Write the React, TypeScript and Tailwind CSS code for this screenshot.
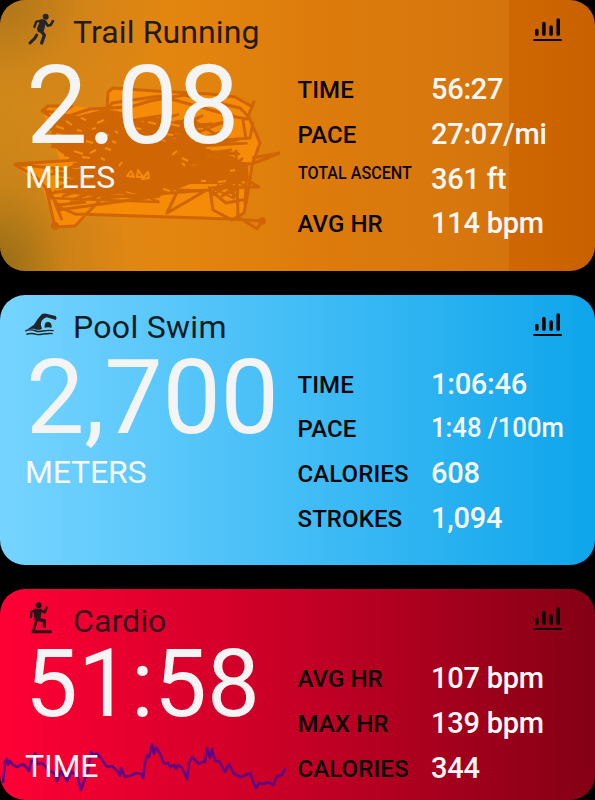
import React from "react";

interface Stat {
  label: string;
  value: string;
  labelClass?: string;
  valueClass?: string;
}

interface CardProps {
  title: string;
  icon: React.ReactNode;
  value: string;
  valueClass: string;
  unit: string;
  titleClass: string;
  stats: Stat[];
  className: string;
  children?: React.ReactNode;
}

const RunIcon = () => (
  <svg viewBox="0 0 150 150" className="h-[50px] w-[50px]" fill="none" stroke="#24262a" strokeLinejoin="round">
    <circle cx="77" cy="35" r="9" fill="#24262a" stroke="none" />
    <path d="M43 66 L49 50 L66 47" strokeWidth="7" strokeLinecap="round" />
    <path d="M76 50 L83 62 L92 60 L99 48" strokeWidth="7.5" strokeLinecap="round" />
    <path d="M59 47 Q70 42 77 49 L70 76 Q64 84 55 79 L53 70 L60 55 Z" fill="#24262a" strokeWidth="4" />
    <path d="M62 76 L73 91 L65 114" strokeWidth="10" strokeLinecap="round" />
    <path d="M30 114 L45 99 L50 90" strokeWidth="9" strokeLinecap="round" />
  </svg>
);

const SwimIcon = () => (
  <svg viewBox="0 0 150 150" className="h-[50px] w-[50px]" fill="#20252a">
    <path d="M20 89 L42 74 Q51 58 65 43 Q71 39 78 41 L107 48 Q112 53 108 60 L80 52 Q73 53 66 61 Q59 72 66 86 Q55 93 42 86 Q30 86 20 89 Z" />
    <path d="M74 83 Q72 66 84 66 Q96 66 95 83 Q84 81 74 83 Z" />
    <path
      d="M16 93 C30 86 40 90 51 94 C65 97 75 88 101 92 M19 103 C34 97 43 101 54 104 C68 104 80 98 98 101"
      fill="none"
      stroke="#20252a"
      strokeWidth="4.2"
    />
  </svg>
);

const CardioIcon = () => (
  <svg viewBox="0 0 150 150" className="h-[50px] w-[50px]" fill="none" stroke="#2c1216" strokeLinejoin="round">
    <circle cx="56" cy="34" r="9" fill="#2c1216" stroke="none" />
    <path d="M33 69 L34 54 L46 48" strokeWidth="7" strokeLinecap="round" />
    <path d="M62 49 L74 55 L80 41" strokeWidth="8" strokeLinecap="round" />
    <path d="M43 47 H63 L59 75 L46 78 Z" fill="#2c1216" strokeWidth="5" />
    <path d="M50 76 L73 80 L73 97" strokeWidth="10" strokeLinecap="round" />
    <path d="M50 79 L45 94 L40 113" strokeWidth="8" />
    <path d="M35 113 H95" strokeWidth="9" />
  </svg>
);

const ChartIcon = () => (
  <svg viewBox="0 0 29 24" className="mt-[17px] mr-[33px] ml-auto h-[24px] w-[29px]" fill="none" stroke="#0b0706">
    <path d="M3.8 13.5 V17.2 M10.9 6.5 V17.2 M18.1 10 V17.2 M25.2 3 V17.2" strokeWidth="3.6" strokeLinecap="round" />
    <path d="M0.3 23 H28.7" strokeWidth="2" />
  </svg>
);

// small LCG so the scribble comes out the same on every render
const scribble = (seed: number, count: number, x0: number, y0: number, w: number, h: number) => {
  let s = seed;
  const rand = () => {
    s = (s * 16807) % 2147483647;
    return s / 2147483647;
  };
  let d = "";
  for (let i = 0; i < count; i++) {
    const side = i % 2 === 0 ? rand() * 0.5 : 0.5 + rand() * 0.5;
    const x = x0 + side * w;
    const y = y0 + rand() * h;
    d += `${i === 0 ? "M" : "L"}${x.toFixed(1)} ${y.toFixed(1)} `;
  }
  return d;
};

const TrailMap = () => (
  <svg viewBox="0 0 300 270" className="absolute top-0 left-0 h-[270px] w-[300px]" fill="none">
    <path
      d="M42 111 L49 105 L69 106 L106 109 L108 89 L113 87 L210 94 L235 98 L250 107 L247 118 L260 142 L252 162 L247 187 L244 212 L232 219 L165 216 L90 215 L75 226 L55 226 L43 189 L14 164 L60 161 L50 130 Z"
      fill="#f58b07"
    />
    <g stroke="#d06603" strokeWidth="3" strokeLinejoin="round">
      <path d="M42 111 L48 106 L72 106 L62 113 L42 111 L56 120 L90 109 L130 107 L150 101 L184 95 L240 108 L249 117 L260 143 L252 165 L249 187 L244 213 L232 220 L213 210 L210 190 L226 203 L247 199 M107 110 L108 92 L113 88 L155 91 L210 94 L235 97 L251 106 L254 102 L247 119 L236 117 L160 96 L112 103 Z" />
      <path d="M280 153 L252 158 M280 153 L252 164 L190 160 M14 164 L36 177 L46 188 L55 227 L75 226 L102 198 L210 190 M55 205 L75 214 L232 219 L262 221 L257 229 L240 218 M167 213 L205 191 L178 190 Z M58 210 L160 196 M45 188 L58 205 L86 202 M49 188 L62 220" />
      <path d="M253 122 L250 138 L225 140 L192 120 M240 176 L259 187 L208 188 M243 120 L246 139 M14 164 L110 158 M14 164 L80 171 M236 150 L238 218 M247 165 L245 205" />
      <path d={scribble(71, 62, 50, 111, 130, 54)} strokeWidth="2.4" />
      <path d={scribble(4242, 56, 110, 110, 128, 56)} strokeWidth="2.4" />
      <path d={scribble(913, 72, 50, 142, 200, 46)} strokeWidth="2.6" />
      <path d={scribble(37, 42, 49, 166, 112, 37)} strokeWidth="2.5" />
      <path d={scribble(503, 26, 210, 158, 38, 44)} strokeWidth="2.2" />
    </g>
    {/* densest part of the track */}
    <path
      d="M53 122 L62 113 L78 116 L105 109 L122 112 L130 122 L124 138 L155 145 L180 152 L192 166 L220 160 L247 163 L249 178 L236 184 L190 184 L158 197 L132 193 L106 184 L92 172 L70 158 L60 152 L50 143 Z"
      fill="#d06603"
    />
    <path
      d="M66 121 l6 4 M81 118 l5 2 M97 123 l7 -3 M101 134 l8 1 M86 141 l7 2 M74 151 l9 3 M90 153 l6 -3 M82 157 l8 1 M105 148 l6 2 M101 158 l4 2 M115 131 l3 2 M172 155 l5 -4 M182 163 l3 3 M182 158 l6 3 M138 170 l5 7 l-6 0 z M142 179 l6 -7 l1 6 z M127 176 l4 -5 l3 6 z M201 181 l5 0 M218 182 l8 -1 M77 130 l5 1 M163 189 l7 2 M230 171 l5 -1 M119 166 l3 -4 M92 129 l4 -1 M112 141 l4 2 M170 124 l10 2 M128 115 l12 -1 M148 122 l8 2 M134 128 l7 1 M164 134 l9 1 M57 112 l7 0 M56 134 l6 1 M56 126 l8 3"
      stroke="#f58b07"
      strokeWidth="2"
      strokeLinejoin="round"
    />
    <circle cx="262" cy="221" r="3.8" fill="#d06603" />
    <circle cx="55" cy="226" r="4" fill="#d06603" />
  </svg>
);

const HeartRate = () => (
  <svg viewBox="0 0 300 70" className="absolute bottom-0 left-0 h-[70px] w-[300px]" fill="none">
    <path
      d="M3 53 L5 31 L7 29 L8 35 L10 31 L13 35 L17 37 L23 34 L26 37 L29 41 L31 31 L33 32 L35 23 L37 34 L42 33 L46 37 L50 41 L54 43 L57 51 L61 41 L67 51 L71 42 L77 45 L81 60 L85 48 L88 41 L91 22 L94 25 L97 23 L102 30 L107 37 L112 36 L117 41 L120 46 L121 38 L125 47 L132 45 L136 43 L141 44 L143 48 L145 33 L147 25 L149 27 L152 14 L154 24 L156 17 L160 24 L164 34 L168 33 L170 37 L174 35 L176 39 L178 35 L182 38 L187 49 L189 33 L192 27 L199 34 L202 32 L205 32 L207 18 L210 28 L212 19 L215 31 L219 31 L225 42 L229 34 L234 44 L241 47 L250 43 L254 54 L256 58 L259 53 L264 54 L268 52 L273 55 L277 46 L282 45 L285 38"
      stroke="#58048a"
      strokeOpacity="0.92"
      strokeWidth="2.6"
      strokeLinejoin="round"
    />
  </svg>
);

const ActivityCard = ({ title, icon, value, valueClass, unit, titleClass, stats, className, children }: CardProps) => (
  <section className={`relative shrink-0 overflow-hidden rounded-[25px] ${className}`}>
    {children}
    <header className="relative flex h-[64px] items-start pl-[20px]">
      <div className="pt-[5px]">{icon}</div>
      <h2 className={`ml-[3px] text-[32px] leading-[64px] ${titleClass}`}>{title}</h2>
      <div className="ml-auto">
        <ChartIcon />
      </div>
    </header>
    <div className="relative flex">
      <div className="w-[297.5px] shrink-0 pl-[25px] whitespace-nowrap">
        <div className={`h-[84px] text-[#f4f4f4] ${valueClass}`}>{value}</div>
        <div className="text-[32px] leading-[58px] tracking-[-0.2px] text-[#f8f8f8]">{unit}</div>
      </div>
      <dl className="grid auto-rows-[44.8px] grid-cols-[133.5px_1fr] pt-[4px] font-medium whitespace-nowrap">
        {stats.map((stat) => (
          <React.Fragment key={stat.label}>
            <dt className={`text-[#080606] ${stat.labelClass ?? "text-[24px] leading-[45px] tracking-[0.1px]"}`}>
              {stat.label}
            </dt>
            <dd className={`text-[#f8f8f8] ${stat.valueClass ?? "text-[29px] leading-[43px] tracking-[-0.25px]"}`}>
              {stat.value}
            </dd>
          </React.Fragment>
        ))}
      </dl>
    </div>
  </section>
);

export default function App() {
  return (
    <main className="flex h-[800px] w-[595px] flex-col gap-[24px] overflow-hidden bg-black font-['Roboto',sans-serif]">
      <ActivityCard
        title="Trail Running"
        titleClass="text-[#231a12] tracking-[0.1px]"
        icon={<RunIcon />}
        value="2.08"
        valueClass="text-[110px] leading-[84px] tracking-[-0.3px] pl-px"
        unit="MILES"
        stats={[
          { label: "TIME", value: "56:27" },
          { label: "PACE", value: "27:07/mi" },
          {
            label: "TOTAL ASCENT",
            value: "361 ft",
            labelClass: "text-[17.5px] leading-[31px] w-max h-max origin-left scale-x-[0.92]",
          },
          { label: "AVG HR", value: "114 bpm" },
        ]}
        className="h-[270.5px] bg-[linear-gradient(90deg,#d58a1a_0px,#de8716_100px,#e3860f_170px,#de7d0c_300px,#d5740c_509px,#cf6801_509px,#c96000_595px)]"
      >
        <div className="absolute inset-0 bg-[radial-gradient(ellipse_170px_150px_at_0px_0px,#8f651a90,#b0771a38_50%,#c0801a00),radial-gradient(ellipse_130px_170px_at_0px_270px,#6e5a14a0,#a06f1440_50%,#c0801a00)]" />
        <TrailMap />
      </ActivityCard>
      <ActivityCard
        title="Pool Swim"
        titleClass="text-[#0e1c24] tracking-[0.3px]"
        icon={<SwimIcon />}
        value="2,700"
        valueClass="text-[104px] leading-[78px] tracking-[-0.3px] pl-px"
        unit="METERS"
        stats={[
          { label: "TIME", value: "1:06:46" },
          {
            label: "PACE",
            value: "1:48 /100m",
            valueClass: "text-[28px] leading-[41px] w-max h-max origin-left scale-x-[0.915]",
          },
          { label: "CALORIES", value: "608" },
          { label: "STROKES", value: "1,094" },
        ]}
        className="h-[270.5px] bg-[linear-gradient(90deg,#76d4ff,#43bdf6_50%,#0ea5eb)]"
      />
      <ActivityCard
        title="Cardio"
        titleClass="text-[#37101a] tracking-[0.1px]"
        icon={<CardioIcon />}
        value="51:58"
        valueClass="text-[94px] leading-[62px] tracking-[0.2px]"
        unit="TIME"
        stats={[
          { label: "AVG HR", value: "107 bpm" },
          { label: "MAX HR", value: "139 bpm" },
          { label: "CALORIES", value: "344" },
        ]}
        className="h-[211px] bg-[linear-gradient(90deg,#ff0035,#c60026_50%,#840014)]"
      >
        <HeartRate />
      </ActivityCard>
    </main>
  );
}
